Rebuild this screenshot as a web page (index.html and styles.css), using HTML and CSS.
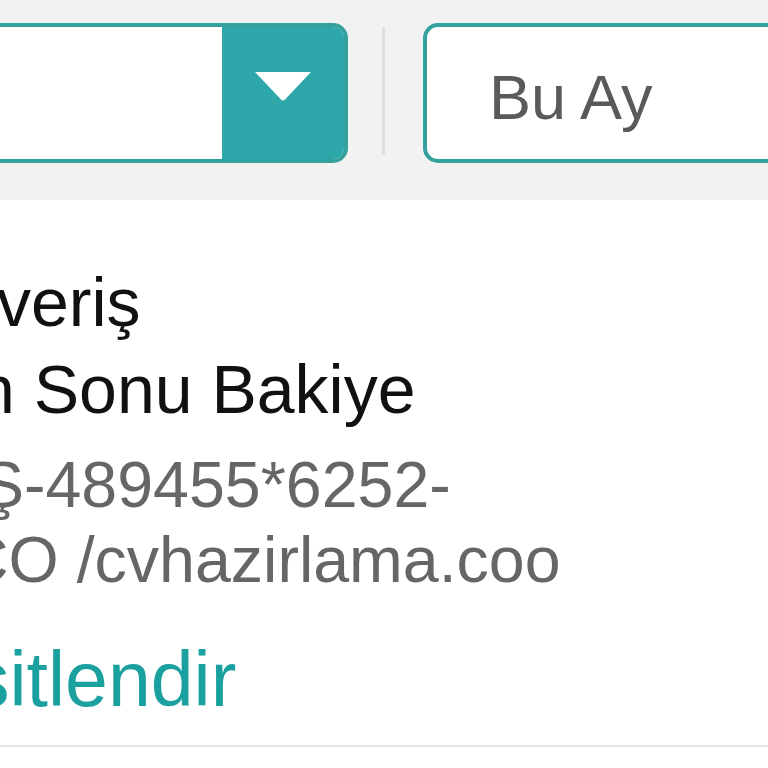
FILE: index.html
```html
<!DOCTYPE html>
<html lang="tr">
<head>
<meta charset="utf-8">
<title>Hesap Hareketleri</title>
<link rel="stylesheet" href="styles.css">
</head>
<body>
<div class="page">
  <div class="toolbar">
    <div class="select">
      <div class="select-field"></div>
      <div class="select-btn">
        <svg class="caret" width="56" height="29" viewBox="0 0 56 29" aria-hidden="true"><path d="M0 0 H56 L30 27.5 Q28 29.5 26 27.5 Z" fill="#ffffff"/></svg>
      </div>
    </div>
    <div class="sep"></div>
    <div class="period"><span class="period-text">Bu Ay</span></div>
  </div>
  <div class="content">
    <div class="title l1">veriş</div>
    <div class="title l2">n Sonu Bakiye</div>
    <div class="desc l3">Ş-489455*6252-</div>
    <div class="desc l4">CO /cvhazirlama.coo</div>
    <div class="link l5">sitlendir</div>
  </div>
  <div class="footer"></div>
</div>
</body>
</html>
```
FILE: styles.css
```css
html, body {
  margin: 0;
  padding: 0;
  background: #ffffff;
}
body {
  width: 768px;
  height: 768px;
  overflow: hidden;
  font-family: "Liberation Sans", Arial, Helvetica, sans-serif;
}
.page {
  width: 768px;
  overflow: hidden;
}
.toolbar {
  height: 200px;
  box-sizing: border-box;
  padding-top: 23px;
  background: #f2f2f2;
  display: flex;
  align-items: flex-start;
}
.select {
  margin-left: -24px;
  width: 372px;
  height: 140px;
  box-sizing: border-box;
  border: 4px solid #34a19c;
  border-radius: 15px;
  display: flex;
  overflow: hidden;
  flex-shrink: 0;
}
.select-field {
  flex: 1;
  background: #ffffff;
}
.select-btn {
  width: 122px;
  background: #2ea7aa;
  display: flex;
  align-items: center;
  justify-content: center;
  padding-bottom: 14px;
  box-sizing: border-box;
}
.caret {
  display: block;
}
.sep {
  margin-left: 34px;
  margin-top: 4px;
  width: 3px;
  height: 128px;
  background: #dedede;
  flex-shrink: 0;
}
.period {
  margin-left: 38px;
  margin-right: -60px;
  flex: 1;
  height: 140px;
  box-sizing: border-box;
  border: 4px solid #34a19c;
  border-radius: 15px;
  background: #ffffff;
  display: flex;
  align-items: center;
  padding-left: 62px;
  padding-top: 8px;
}
.period-text {
  font-size: 63px;
  line-height: 70px;
  color: #5a5a5a;
}
.content {
  padding-top: 59px;
  padding-bottom: 21px;
  background: #ffffff;
  white-space: nowrap;
}
.title {
  font-size: 68px;
  line-height: 87px;
  color: #111111;
}
.desc {
  font-size: 64.5px;
  line-height: 75px;
  color: #666666;
}
.link {
  font-size: 77px;
  line-height: 90px;
  color: #1aa19f;
}
.l1 { margin-left: -3px; }
.l2 { margin-left: -23px; }
.l3 { margin-left: -19px; margin-top: 15px; }
.l4 { margin-left: -38px; }
.l5 { margin-left: -29px; margin-top: 36px; }
.footer {
  border-top: 2px solid #e6e6e6;
  border-bottom: 1px solid #f4f4f4;
  height: 30px;
  background: #ffffff;
}
```
